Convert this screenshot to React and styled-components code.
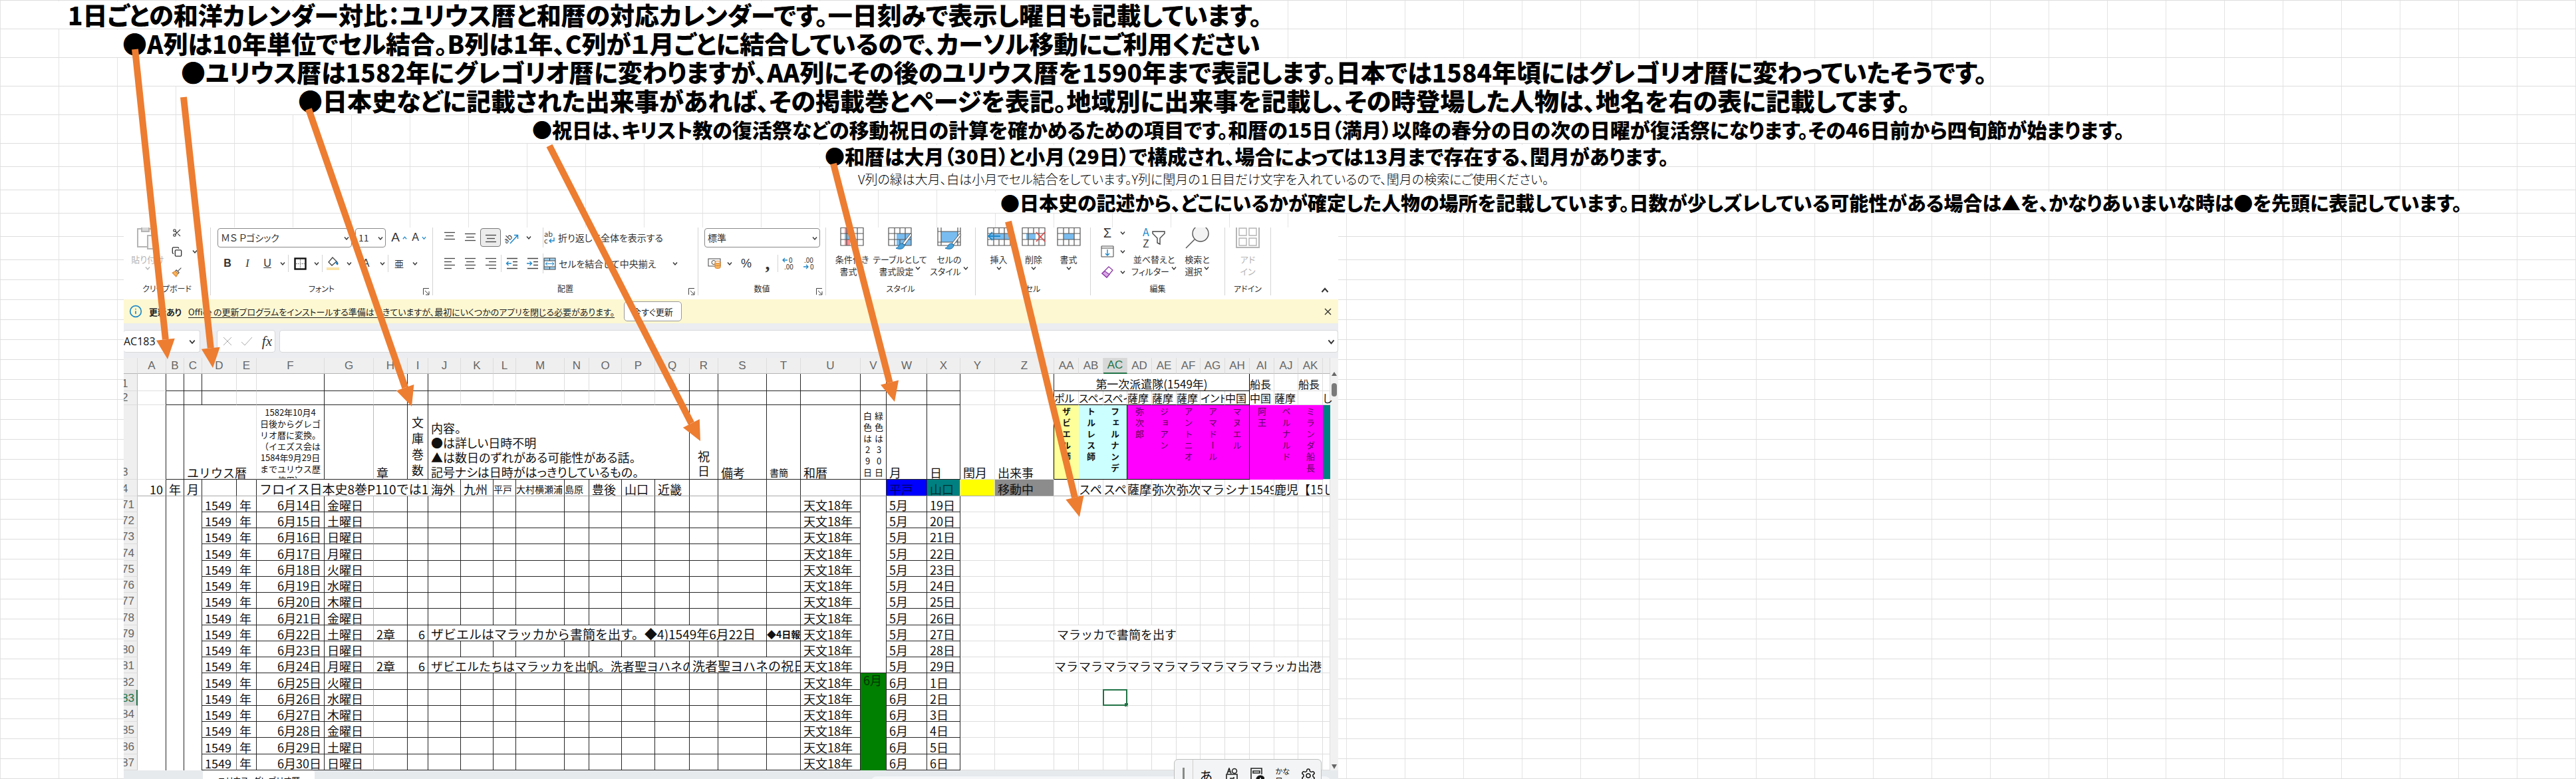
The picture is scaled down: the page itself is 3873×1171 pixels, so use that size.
import React from 'react';
import styled, { createGlobalStyle, css } from 'styled-components';
import { LuSettings, LuScissors, LuCopy, LuInfo } from 'react-icons/lu';

const LINE = '#dedede';
const INK = '#262626';
const ORANGE = '#ed7d31';

const GlobalStyle = createGlobalStyle`
  * {
    box-sizing: border-box;
  }

  body {
    margin: 0;
    background: #fff;
    color: #111;
    font-family: 'Noto Sans CJK JP', sans-serif;
    font-feature-settings: 'palt';
  }

  button, input, select {
    margin: 0;
    padding: 0;
    border: 0;
    background: none;
    color: inherit;
    font: inherit;
    font-feature-settings: inherit;
  }
`;

/* ---------- outer sheet ---------- */

const Page = styled.main`
  position: relative;
  height: 100vh;
  overflow: hidden;
  border-top: 1px solid ${LINE};
  background: repeating-linear-gradient(90deg, #e4e4e4 0 1px, transparent 1px 88px);
`;

const NoteRow = styled.div`
  display: flex;
  align-items: flex-end;
  height: ${({ $small }) => ($small ? '35px' : '43px')};
  padding-left: ${({ $col }) => $col * 88}px;
  border-bottom: 1px solid ${LINE};
`;

const Note = styled.p`
  margin: 0;
  padding-left: ${({ $indent }) => $indent || 8}px;
  background: #fff;
  font-size: ${({ $size }) => $size}px;
  font-weight: ${({ $light }) => ($light ? 300 : 900)};
  line-height: ${({ $small }) => ($small ? '32px' : '41px')};
  color: #000;
  white-space: nowrap;
`;

const Body = styled.div`
  padding: 21px 0 0 186px;
  background:
    linear-gradient(${LINE}, ${LINE}) 0 34px / 100% 1px no-repeat,
    linear-gradient(${LINE}, ${LINE}) 0 69px / 100% 1px no-repeat,
    repeating-linear-gradient(transparent 0 29px, ${LINE} 29px 30px) 0 70px no-repeat;
`;

const Arrows = styled.svg`
  position: absolute;
  top: 0;
  left: 0;
  width: 2100px;
  height: 800px;
  pointer-events: none;
`;

/* ---------- excel window ---------- */

const Window = styled.section`
  position: relative;
  display: inline-flex;
  flex-direction: column;
  vertical-align: top;
  background: #fff;
`;

const Ribbon = styled.div`
  display: flex;
  height: 108px;
  font-size: 13px;
  line-height: 18px;
  color: #333;
  white-space: nowrap;
`;

const Group = styled.div`
  position: relative;
  display: flex;
  flex-direction: column;
  width: ${({ $w }) => $w}px;
  height: 102px;
  border-right: 1px solid #d4d4d4;
`;

const GroupBody = styled.div`
  display: flex;
  height: 86px;
  padding-left: ${({ $pad }) => $pad || 0}px;
`;

const GroupLabel = styled.div`
  height: 20px;
  line-height: 20px;
  font-size: 12px;
  text-align: center;
`;

const Launcher = styled.button`
  position: absolute;
  right: 4px;
  bottom: 0;
  width: 10px;
  height: 12px;
  line-height: 0;
`;

const Stack = styled.div`
  display: flex;
  flex-direction: column;
  gap: ${({ $gap }) => $gap || 0}px;
`;

const Line = styled.div`
  display: flex;
  align-items: center;
  height: ${({ $h }) => $h || 30}px;
`;

const Tool = styled.button`
  display: flex;
  align-items: center;
  justify-content: ${({ $start }) => ($start ? 'flex-start' : 'center')};
  gap: 4px;
  width: ${({ $w }) => $w}px;
  height: 28px;
  flex: none;
  font-size: 14px;
  ${({ $on }) => $on && css`
    border: 1px solid #777;
    border-radius: 4px;
    background: #ececec;
  `}
`;

const Glyph = styled.span`
  font-family: ${({ $serif }) => ($serif ? "'Liberation Serif', serif" : "'Liberation Sans', sans-serif")};
  font-size: ${({ $size }) => $size || 16}px;
  font-weight: ${({ $bold }) => ($bold ? 700 : 400)};
  font-style: ${({ $italic }) => ($italic ? 'italic' : 'normal')};
  text-decoration: ${({ $under }) => ($under ? 'underline' : 'none')};
  color: #333;
`;

const BigTool = styled.button`
  display: flex;
  flex-direction: column;
  align-items: center;
  width: ${({ $w }) => $w}px;
  color: ${({ $off }) => ($off ? '#b5b5b5' : '#333')};

  svg:first-child {
    margin-bottom: 6px;
  }
`;

const Collapse = styled.button`
  align-self: flex-end;
  margin: 0 14px 8px auto;
  line-height: 0;
`;

const Divider = styled.span`
  width: 1px;
  height: ${({ $h }) => $h || 26}px;
  flex: none;
  background: #d4d4d4;
`;

const SelectBox = styled.label`
  position: relative;
  display: block;
  width: ${({ $w }) => $w}px;
  height: 29px;
  margin-right: 5px;

  select {
    width: 100%;
    height: 100%;
    padding-left: 4px;
    border: 1px solid #8a8a8a;
    border-radius: 4px;
    background: #fff;
    appearance: none;
    font-size: 14px;
  }

  svg {
    position: absolute;
    top: 11px;
    right: 4px;
  }
`;

const Notice = styled.div`
  display: flex;
  align-items: center;
  height: 36px;
  padding: 0 10px 0 8px;
  background: #fdf8d2;
  font-size: 13px;
  color: #222;

  strong {
    margin: 0 10px;
  }

  a {
    color: inherit;
    text-underline-offset: 3px;
  }
`;

const NoticeButton = styled.button`
  height: 30px;
  margin-left: 14px;
  padding: 0 12px;
  border: 1px solid #9a9a9a;
  border-radius: 5px;
  background: #fff;
`;

const CloseButton = styled.button`
  margin-left: auto;
  line-height: 0;
`;

const FormulaBar = styled.div`
  display: flex;
  gap: 6px;
  height: 52px;
  padding: 10px 0 8px;
  background: #ebedf0;
`;

const FormulaBox = styled.div`
  display: flex;
  align-items: center;
  justify-content: space-between;
  flex: ${({ $w }) => ($w ? `0 0 ${$w}px` : 1)};
  padding: 0 4px 0 8px;
  border: 1px solid #d6d8da;
  border-radius: 4px;
  background: #fff;

  input {
    width: 100%;
    font-family: 'Open Sans', sans-serif;
    font-size: 16px;
    outline: 0;
  }
`;

const NameBox = styled(FormulaBox)`
  margin-right: 19px;
  padding: 0 6px 0 0;
  border-left: 0;
`;

const SheetArea = styled.div`
  display: flex;
`;

const Table = styled.table`
  width: 1814px;
  table-layout: fixed;
  border-collapse: separate;
  border-spacing: 0;
  font-size: 18px;
  line-height: 20px;
`;

const ColHead = styled.th`
  height: 24px;
  padding: 0;
  border-right: 1px solid #dcdcdc;
  border-bottom: ${({ $on }) => ($on ? '2px solid #217346' : '1px solid #b5b5b5')};
  background: ${({ $on }) => ($on ? '#d8d8d8' : '#efefef')};
  color: ${({ $on }) => ($on ? '#217346' : '#666')};
  font-family: 'Liberation Sans', sans-serif;
  font-size: 17px;
  font-weight: 400;
`;

const RowHead = styled.th`
  padding: 0;
  border-right: ${({ $on }) => ($on ? '2px solid #217346' : '1px solid #c4c4c4')};
  border-bottom: 1px solid #dcdcdc;
  background: ${({ $on }) => ($on ? '#d8d8d8' : '#efefef')};
  color: ${({ $on }) => ($on ? '#217346' : '#666')};
  font-family: 'Liberation Sans', sans-serif;
  font-size: 17px;
  font-weight: 400;
  text-align: left;
  text-indent: -3px;
  vertical-align: bottom;
  overflow: hidden;
`;

const Row = styled.tr`
  height: ${({ $h }) => $h}px;
`;

const Cell = styled.td`
  position: relative;
  padding: 0 ${({ $tight }) => ($tight ? 0 : 4)}px;
  border-right: ${({ $r }) => ($r === 'none' ? '0' : `1px solid ${$r || LINE}`)};
  border-bottom: ${({ $b }) => ($b === 'none' ? '0' : `1px solid ${$b || LINE}`)};
  background: ${({ $bg }) => $bg || 'transparent'};
  color: ${({ $color }) => $color || '#111'};
  font-size: ${({ $size }) => $size || 18}px;
  font-weight: ${({ $bold }) => ($bold ? 700 : 'inherit')};
  font-feature-settings: ${({ $full }) => ($full ? 'normal' : 'inherit')};
  text-align: ${({ $align }) => $align || 'left'};
  vertical-align: ${({ $v }) => $v || 'bottom'};
  white-space: nowrap;
  overflow: ${({ $clip }) => ($clip ? 'hidden' : 'visible')};
`;

const Memo = styled.div`
  height: 110px;
  padding-top: 2px;
  overflow: hidden;
  font-size: 13px;
  line-height: 17px;
  text-align: center;
  white-space: pre;
`;

const Contents = styled.div`
  line-height: 22px;
  white-space: pre;
`;

const Upright = styled.span`
  display: inline-flex;
  flex-direction: column;
  width: ${({ $pitch }) => $pitch}px;
  padding: 1px 0;
  vertical-align: top;

  span {
    display: grid;
    place-items: center;
    height: ${({ $pitch }) => $pitch}px;
    line-height: ${({ $pitch }) => $pitch}px;
    writing-mode: vertical-rl;
    text-orientation: upright;
  }
`;

const Selected = styled.span`
  position: absolute;
  inset: -1px;
  border: 2px solid #217346;

  &::after {
    content: '';
    position: absolute;
    right: -3px;
    bottom: -3px;
    width: 5px;
    height: 5px;
    background: #217346;
  }
`;

const ScrollTrack = styled.div`
  display: flex;
  flex-direction: column;
  align-items: center;
  justify-content: space-between;
  width: 12px;
  padding: 8px 0 2px;
  background: #f1f1f1;
`;

const ScrollThumb = styled.div`
  width: 8px;
  height: 20px;
  margin-top: 6px;
  border-radius: 4px;
  background: #7a7a7a;
`;

const Tabs = styled.div`
  display: flex;
  height: 42px;
  padding-left: 119px;
  background: #e6eaed;
`;

const SheetTab = styled.button`
  width: 168px;
  height: 30px;
  border-radius: 4px;
  background: #fff;
  font-size: 13px;
  line-height: 30px;
`;

const HScroll = styled.div`
  height: 16px;
  width: 690px;
  margin: 9px 12px 0 auto;
  border-radius: 8px;
  background: #f4f6f7;
`;

const Ime = styled.div`
  position: absolute;
  right: 25px;
  bottom: 9px;
  display: flex;
  align-items: center;
  width: 222px;
  height: 50px;
  border: 1px solid #bdbdbd;
  border-radius: 6px;
  background: #f3f4f5;
  font-size: 20px;

  button {
    flex: 1;
    line-height: 13px;
  }

  small {
    display: block;
    font-size: 11px;
  }
`;

const ImeGrip = styled.span`
  width: 28px;
  height: 100%;
  padding: 12px 0 0 12px;
  border-right: 1px solid #cfcfcf;

  &::before {
    content: '';
    display: block;
    width: 3px;
    height: 26px;
    background: #888;
  }
`;

/* ---------- icons ---------- */

const Chevron = ({ size = 8, up, color = '#333' }) => (
  <svg width={size} height={size} viewBox="0 0 8 8" fill="none" stroke={color} strokeWidth="1.4">
    <path d={up ? 'M1 6 4 2.5 7 6' : 'M1 2.5 4 6 7 2.5'} />
  </svg>
);

const LaunchIcon = () => (
  <svg width="10" height="11" viewBox="0 0 10 11" fill="none" stroke="#444">
    <path d="M.5 10V.5H9M3 4l6 6M9 5v5H4" />
  </svg>
);

const PasteIcon = () => (
  <svg width="34" height="33" viewBox="0 0 34 33" fill="none" stroke="#b5b5b5" strokeWidth="2">
    <path d="M7 2H2v27h14M20 2h4v8" />
    <path d="M8 0v6h11V0" fill="#d8d8d8" />
    <rect x="17" y="12" width="14" height="20" fill="#f7f7f7" />
  </svg>
);

const BrushIcon = () => (
  <svg width="20" height="20" viewBox="0 0 20 20" fill="none" stroke="#444" strokeWidth="1.3">
    <path d="M18 2 12 8M9 6l5 5-2 2-5-5z" fill="#fff" />
    <path d="M7 8 1.5 11.5 8.5 18.5 12 13z" fill="#f7b45c" stroke="#d9822b" />
  </svg>
);

const AlignIcon = ({ rows, y = 0 }) => (
  <svg width="18" height="20" viewBox="0 0 18 20" stroke="#444" strokeWidth="1.3">
    {rows.map(([x, w], i) => (
      <path key={i} d={`M${x} ${2.5 + y + i * 5}h${w}`} />
    ))}
  </svg>
);

const IndentIcon = ({ right }) => (
  <svg width="18" height="20" viewBox="0 0 18 20" fill="none" stroke="#444" strokeWidth="1.3">
    <path d="M1 2.5h16M10 7.5h7M10 12.5h7M1 17.5h16" />
    <path d={right ? 'M0 10h7M4.5 7 7.5 10l-3 3' : 'M8 10H1M3.5 7 .5 10l3 3'} stroke="#1e88c9" />
  </svg>
);

const BordersIcon = () => (
  <svg width="19" height="19" viewBox="0 0 19 19" fill="none">
    <rect x="1.5" y="1.5" width="16" height="16" stroke="#111" strokeWidth="2.4" />
    <path d="M9.5 3v13M3 9.5h13" stroke="#777" strokeDasharray="2 1" />
  </svg>
);

const FillIcon = () => (
  <svg width="20" height="22" viewBox="0 0 20 22" fill="none">
    <path d="M9 2 3 9l5 5 7-6zM15 8c2 2 2 4 1 5" stroke="#444" strokeWidth="1.3" />
    <path d="M14 7l3 6-3-1z" fill="#1e88c9" />
    <rect x="0" y="17" width="19" height="4" fill="#fbe3a6" />
  </svg>
);

const OrientIcon = () => (
  <svg width="22" height="20" viewBox="0 0 22 20" fill="none">
    <text x="-3" y="13" fontSize="12" fill="#444" transform="rotate(-45 8 10)">ab</text>
    <path d="M8 19 19 7M14 6.5h5.5V12" stroke="#1e88c9" strokeWidth="1.5" />
  </svg>
);

const WrapIcon = () => (
  <svg width="18" height="20" viewBox="0 0 18 20" fill="none">
    <text x="1" y="9" fontSize="11" fill="#444">ab</text>
    <text x="1" y="19" fontSize="11" fill="#444">c</text>
    <path d="M16 10v5H9M12 12l-3 3 3 3" stroke="#1e88c9" strokeWidth="1.4" />
  </svg>
);

const MergeIcon = () => (
  <svg width="19" height="19" viewBox="0 0 19 19" fill="none">
    <rect x="1" y="1" width="17" height="17" fill="#9fd0ef" stroke="#444" />
    <rect x="2" y="5" width="15" height="9" fill="#fff" />
    <path d="M1 5h17M1 14h17M9.5 1v4M9.5 14v4" stroke="#444" />
    <path d="M3 9.5h13M6 7 3 9.5 6 12M13 7l3 2.5L13 12" stroke="#1e88c9" />
  </svg>
);

const MoneyIcon = () => (
  <svg width="20" height="18" viewBox="0 0 20 18" fill="none" stroke="#444">
    <rect x="1" y="2" width="18" height="11" />
    <circle cx="9" cy="7.5" r="3" />
    <path d="M11 7v8c0 2 8 2 8 0V7" fill="#f7b45c" stroke="#d9822b" />
    <ellipse cx="15" cy="7" rx="4" ry="1.7" fill="#fff" stroke="#d9822b" />
    <path d="M11 11c0 2 8 2 8 0" stroke="#d9822b" />
  </svg>
);

const DecimalIcon = ({ more }) => (
  <svg width="20" height="20" viewBox="0 0 20 20" fill="none">
    <text x={more ? 10 : 2} y="9" fontSize="10" fill="#333">{more ? '0' : '.00'}</text>
    <text x={more ? 3 : 11} y="19" fontSize="10" fill="#333">{more ? '.00' : '0'}</text>
    <path d={more ? 'M8 5H1M4 2 1 5l3 3' : 'M1 15h7M5 12l3 3-3 3'} stroke="#1e88c9" strokeWidth="1.3" />
  </svg>
);

const GridIcon = ({ kind }) => (
  <svg width="36" height="33" viewBox="0 0 36 33" fill="none">
    {kind === 'cond' && <path d="M7 0h11v9H7zM7 18h8v9H7z" fill="#ff8f94" />}
    {kind === 'cond' && <path d="M7 9h7v9H7z" fill="#79bdf0" />}
    {kind === 'table' && <path d="M13 9h22v18H13z" fill="#79bdf0" />}
    {kind === 'style' && <path d="M6 6h25v16H6z" fill="#79bdf0" />}
    {kind === 'insert' && <path d="M5 9h30v9H5z" fill="#79bdf0" />}
    {kind === 'delete' && <path d="M7 9h14v9H7z" fill="#79bdf0" />}
    {kind === 'format' && <path d="M10 9h16v9H10z" fill="#79bdf0" />}
    <path
      d={kind === 'style' ? 'M1 0v27h34V0M1 6h34M1 22h34M6 0v27M31 0v27' : 'M1 0v27h34V0M1 9h34M1 18h34M10 0v27M18 0v9M18 18v9M26 0v27M1 .5h34'}
      stroke="#555"
      strokeWidth="1.2"
    />
    {(kind === 'table' || kind === 'style') && (
      <g>
        <path d="M34 9 22 24l3 2 11-15z" fill="#fff" stroke="#555" />
        <path d="M21 24c-5 0-4 6-9 7 6 3 13 1 13-5z" fill="#4aa3dc" stroke="#1e6fa8" />
      </g>
    )}
    {kind === 'insert' && <path d="M20 13H2M8 7l-6 6 6 6" stroke="#1e88c9" strokeWidth="1.8" />}
    {kind === 'delete' && <path d="M22 7l13 14M35 7 22 21" stroke="#e04b4b" strokeWidth="1.8" />}
  </svg>
);

const SortIcon = () => (
  <svg width="36" height="33" viewBox="0 0 36 33" fill="none">
    <text x="1" y="13" fontSize="16" fill="#1e88c9">A</text>
    <text x="1" y="30" fontSize="16" fill="#444">Z</text>
    <path d="M16 6h18v3l-7 7v9l-4-2v-7l-7-7z" stroke="#444" strokeWidth="1.4" />
  </svg>
);

const FindIcon = () => (
  <svg width="36" height="33" viewBox="0 0 36 33" fill="none" stroke="#555" strokeWidth="1.4">
    <circle cx="23" cy="9" r="12" fill="#f3f3f3" />
    <path d="M14 18 1 31" />
  </svg>
);

const AddinIcon = () => (
  <svg width="36" height="33" viewBox="0 0 36 33" fill="none" stroke="#b5b5b5" strokeWidth="1.4">
    <path d="M1 0v30h34V0" strokeWidth="2" />
    <path d="M5 1h11v11H5zM20 1h11v11H20zM5 16h11v11H5zM20 16h11v11H20z" />
  </svg>
);

const DownBoxIcon = () => (
  <svg width="20" height="18" viewBox="0 0 20 18" fill="none" stroke="#444">
    <path d="M1 1h18v16H1zM1 4h18" />
    <path d="M10 6v9M7 12l3 3 3-3" stroke="#1e88c9" strokeWidth="1.4" />
  </svg>
);

const EraserIcon = () => (
  <svg width="20" height="18" viewBox="0 0 20 18" fill="none" stroke="#8e3fa8" strokeWidth="1.3">
    <path d="M12 1 18 6 9 17 2 11z" fill="#fff" />
    <path d="M6 7.5 2 11l7 6 4-4.5z" fill="#d9a7e6" />
  </svg>
);

const ImeToolIcon = () => (
  <svg width="20" height="24" viewBox="0 0 20 24" fill="none" stroke="#222" strokeWidth="1.6">
    <path d="M3 9 6 1l3 8M4 6h4M2 10h16v12H2zM7 16h6v-2" />
    <circle cx="14" cy="5" r="3.5" />
  </svg>
);

const ImePadIcon = () => (
  <svg width="22" height="24" viewBox="0 0 22 24" fill="none" stroke="#222" strokeWidth="1.6">
    <path d="M9 22H2V1h16v9M5 5h10v3H5z" />
    <circle cx="16" cy="18" r="6" fill="#111" />
    <path d="M16 15v6" stroke="#fff" />
  </svg>
);

const Arrow = ({ from, to }) => {
  const dx = to[0] - from[0];
  const dy = to[1] - from[1];
  const len = Math.hypot(dx, dy);
  const ux = dx / len;
  const uy = dy / len;
  const bx = to[0] - ux * 30;
  const by = to[1] - uy * 30;
  return (
    <g fill={ORANGE} stroke="none">
      <path d={`M${from[0]} ${from[1]}L${bx} ${by}`} stroke={ORANGE} strokeWidth="10" />
      <path d={`M${to[0]} ${to[1]}L${bx - uy * 14} ${by + ux * 14}L${bx + uy * 14} ${by - ux * 14}Z`} />
    </g>
  );
};

/* ---------- data ---------- */

const notes = [
  { col: 1, size: 37, indent: 14, text: '1日ごとの和洋カレンダー対比：ユリウス暦と和暦の対応カレンダーです。一日刻みで表示し曜日も記載しています。' },
  { col: 2, size: 37, text: '●A列は10年単位でセル結合。B列は1年、C列が１月ごとに結合しているので、カーソル移動にご利用ください' },
  { col: 3, size: 37, text: '●ユリウス暦は1582年にグレゴリオ暦に変わりますが、AA列にその後のユリウス暦を1590年まで表記します。日本では1584年頃にはグレゴリオ暦に変わっていたそうです。' },
  { col: 5, size: 37, text: '●日本史などに記載された出来事があれば、その掲載巻とページを表記。地域別に出来事を記載し、その時登場した人物は、地名を右の表に記載してます。' },
  { col: 9, size: 30, text: '●祝日は、キリスト教の復活祭などの移動祝日の計算を確かめるための項目です。和暦の15日（満月）以降の春分の日の次の日曜が復活祭になります。その46日前から四旬節が始まります。' },
  { col: 14, size: 30, small: true, text: '●和暦は大月（30日）と小月（29日）で構成され、場合によっては13月まで存在する、閏月があります。' },
  { col: 14, size: 19, small: true, light: true, indent: 58, text: 'V列の緑は大月、白は小月でセル結合をしています。Y列に閏月の１日目だけ文字を入れているので、閏月の検索にご使用ください。' },
  { col: 17, size: 29, small: true, text: '●日本史の記述から、どこにいるかが確定した人物の場所を記載しています。日数が少しズレしている可能性がある場合は▲を、かなりあいまいな時は●を先頭に表記しています。' },
];

const arrows = [
  { from: [203, 73], to: [252, 539] },
  { from: [276, 145], to: [320, 552] },
  { from: [464, 163], to: [619, 610] },
  { from: [826, 218], to: [1053, 662] },
  { from: [1253, 245], to: [1345, 603] },
  { from: [1516, 332], to: [1623, 776] },
];

const columns = [
  ['A', 43], ['B', 27], ['C', 27], ['D', 52], ['E', 30], ['F', 102], ['G', 74], ['H', 51], ['I', 31],
  ['J', 49], ['K', 49], ['L', 34], ['M', 73], ['N', 37], ['O', 49], ['P', 50], ['Q', 52], ['R', 43],
  ['S', 73], ['T', 51], ['U', 90], ['V', 39], ['W', 61], ['X', 50], ['Y', 52], ['Z', 89], ['AA', 37],
  ['AB', 37], ['AC', 36], ['AD', 37], ['AE', 37], ['AF', 36], ['AG', 37], ['AH', 37], ['AI', 37],
  ['AJ', 36], ['AK', 37], ['', 11],
];

const people = [
  { name: 'ザビエル師', bg: '#ffff99', bold: true },
  { name: 'トルレス師', bg: '#ccffff', bold: true },
  { name: 'フェルナンデ', bg: '#ccffff', bold: true, r: '#000' },
  { name: '弥次郎' },
  { name: 'ジョアン' },
  { name: 'アントニオ' },
  { name: 'アマドール' },
  { name: 'マヌエル', r: '#000' },
  { name: '阿王' },
  { name: 'ベルナルド' },
  { name: 'ミランダ船長' },
];

const homes = ['ポル', 'スペイ', 'スペイ', '薩摩', '薩摩', '薩摩', 'インド', '中国', '中国', '薩摩', '', 'し'];
const places = ['', 'スペ', 'スペ', '薩摩', '弥次', '弥次', 'マラ', 'シナ', '1549', '鹿児', '【15', 'し'];
const regions = [['海外'], ['九州'], ['平戸', 14], ['大村横瀬浦', 14], ['島原', 14], ['豊後'], ['山口'], ['近畿']];
const weekdays = ['金', '土', '日', '月', '火', '水', '木'];

const days = Array.from({ length: 17 }, (_, i) => ({
  no: 71 + i,
  date: `6月${14 + i}日`,
  weekday: `${weekdays[i % 7]}曜日`,
  month: i < 11 ? '5月' : '6月',
  day: i < 11 ? `${19 + i}日` : `${i - 10}日`,
}));

const isDark = (name) => !['D', 'E', 'G', 'J', 'K', 'L', 'M', 'N', 'O', 'P', 'Y'].includes(name);

const Vertical = ({ text, pitch = 17 }) => (
  <Upright $pitch={pitch}>
    {[...text].map((ch, i) => <span key={i}>{ch}</span>)}
  </Upright>
);

/* ---------- ribbon ---------- */

const Drop = () => <Tool $w={16} aria-label="開く"><Chevron /></Tool>;

const Big = ({ w, icon, lines, off }) => (
  <BigTool $w={w} $off={off}>
    {icon}
    <span>{lines[0]}</span>
    <span>
      {lines[1]} {!off && <Chevron />}
    </span>
  </BigTool>
);

const RibbonBar = () => (
  <Ribbon>
    <Group $w={131}>
      <GroupBody>
        <BigTool $w={72} $off>
          <PasteIcon />
          <span>貼り付け</span>
          <Chevron color="#b5b5b5" />
        </BigTool>
        <Stack>
          <Line $h={15}><Tool $w={16} aria-label="切り取り"><LuScissors size={14} /></Tool></Line>
          <Line $h={42}><Tool $w={16} aria-label="コピー"><LuCopy size={17} /></Tool><Tool $w={38} aria-label="コピーの種類"><Chevron /></Tool></Line>
          <Line $h={20}><Tool $w={16} aria-label="書式のコピー"><BrushIcon /></Tool></Line>
        </Stack>
      </GroupBody>
      <GroupLabel>クリップボード</GroupLabel>
    </Group>

    <Group $w={334}>
      <GroupBody $pad={10}>
        <Stack $gap={9}>
          <Line>
            <SelectBox $w={202}>
              <select aria-label="フォント"><option>ＭＳ Ｐゴシック</option></select>
              <Chevron />
            </SelectBox>
            <SelectBox $w={46}>
              <select aria-label="サイズ"><option>11</option></select>
              <Chevron />
            </SelectBox>
            <Tool $w={30}><Glyph $size={19}>A</Glyph><Chevron up size={7} color="#1e88c9" /></Tool>
            <Tool $w={30}><Glyph $size={16}>A</Glyph><Chevron size={7} color="#1e88c9" /></Tool>
          </Line>
          <Line>
            <Tool $w={30}><Glyph $bold>B</Glyph></Tool>
            <Tool $w={30}><Glyph $serif $italic>I</Glyph></Tool>
            <Tool $w={30}><Glyph $under>U</Glyph></Tool>
            <Drop />
            <Divider />
            <Tool $w={34} aria-label="罫線"><BordersIcon /></Tool>
            <Drop />
            <Divider />
            <Tool $w={32} aria-label="塗りつぶし"><FillIcon /></Tool>
            <Drop />
            <Tool $w={34}><Glyph>A</Glyph></Tool>
            <Drop />
            <Divider />
            <Tool $w={32}>亜</Tool>
            <Drop />
          </Line>
        </Stack>
      </GroupBody>
      <GroupLabel>フォント</GroupLabel>
      <Launcher aria-label="フォントの設定"><LaunchIcon /></Launcher>
    </Group>

    <Group $w={399}>
      <GroupBody $pad={9}>
        <Stack $gap={9}>
          <Line>
            <Tool $w={31} aria-label="上揃え"><AlignIcon rows={[[1, 16], [3, 12], [1, 16]]} /></Tool>
            <Tool $w={31} aria-label="上下中央揃え"><AlignIcon y={2} rows={[[1, 16], [3, 12], [1, 16]]} /></Tool>
            <Tool $w={31} $on aria-label="下揃え"><AlignIcon y={4} rows={[[1, 16], [3, 12], [1, 16]]} /></Tool>
            <Tool $w={34} aria-label="方向"><OrientIcon /></Tool>
            <Drop />
          </Line>
          <Line>
            <Tool $w={31} aria-label="左揃え"><AlignIcon rows={[[1, 16], [1, 11], [1, 16], [1, 11]]} /></Tool>
            <Tool $w={31} aria-label="中央揃え"><AlignIcon rows={[[1, 16], [3, 12], [1, 16], [3, 12]]} /></Tool>
            <Tool $w={31} aria-label="右揃え"><AlignIcon rows={[[1, 16], [6, 11], [1, 16], [6, 11]]} /></Tool>
            <Divider />
            <Tool $w={31} aria-label="インデントを減らす"><IndentIcon /></Tool>
            <Tool $w={31} aria-label="インデントを増やす"><IndentIcon right /></Tool>
          </Line>
        </Stack>
        <Stack $gap={9}>
          <Line><Divider $h={30} /><Tool $w={190} $start><WrapIcon />折り返して全体を表示する</Tool></Line>
          <Line><Divider $h={30} /><Tool $w={190} $start><MergeIcon />セルを結合して中央揃え</Tool><Drop /></Line>
        </Stack>
      </GroupBody>
      <GroupLabel>配置</GroupLabel>
      <Launcher aria-label="配置の設定"><LaunchIcon /></Launcher>
    </Group>

    <Group $w={192}>
      <GroupBody $pad={9}>
        <Stack $gap={9}>
          <Line>
            <SelectBox $w={174}>
              <select aria-label="表示形式"><option>標準</option></select>
              <Chevron />
            </SelectBox>
          </Line>
          <Line>
            <Tool $w={30} aria-label="通貨"><MoneyIcon /></Tool>
            <Drop />
            <Tool $w={34}><Glyph $size={18}>%</Glyph></Tool>
            <Tool $w={30}><Glyph $serif $bold $size={28}>,</Glyph></Tool>
            <Divider />
            <Tool $w={32} aria-label="小数点以下を増やす"><DecimalIcon more /></Tool>
            <Tool $w={30} aria-label="小数点以下を減らす"><DecimalIcon /></Tool>
          </Line>
        </Stack>
      </GroupBody>
      <GroupLabel>数値</GroupLabel>
      <Launcher aria-label="数値の設定"><LaunchIcon /></Launcher>
    </Group>

    <Group $w={225}>
      <GroupBody $pad={4}>
        <Big w={70} icon={<GridIcon kind="cond" />} lines={['条件付き', '書式']} />
        <Big w={74} icon={<GridIcon kind="table" />} lines={['テーブルとして', '書式設定']} />
        <Big w={74} icon={<GridIcon kind="style" />} lines={['セルの', 'スタイル']} />
      </GroupBody>
      <GroupLabel>スタイル</GroupLabel>
    </Group>

    <Group $w={173}>
      <GroupBody $pad={8}>
        <Big w={53} icon={<GridIcon kind="insert" />} lines={['挿入', '']} />
        <Big w={52} icon={<GridIcon kind="delete" />} lines={['削除', '']} />
        <Big w={53} icon={<GridIcon kind="format" />} lines={['書式', '']} />
      </GroupBody>
      <GroupLabel>セル</GroupLabel>
    </Group>

    <Group $w={202}>
      <GroupBody $pad={10}>
        <Stack>
          <Line $h={15}><Tool $w={30}><Glyph $size={20}>Σ</Glyph></Tool><Drop /></Line>
          <Line $h={42}><Tool $w={30} aria-label="フィル"><DownBoxIcon /></Tool><Drop /></Line>
          <Line $h={20}><Tool $w={30} aria-label="クリア"><EraserIcon /></Tool><Drop /></Line>
        </Stack>
        <Big w={78} icon={<SortIcon />} lines={['並べ替えと', 'フィルター']} />
        <Big w={52} icon={<FindIcon />} lines={['検索と', '選択']} />
      </GroupBody>
      <GroupLabel>編集</GroupLabel>
    </Group>

    <Group $w={69}>
      <GroupBody>
        <Big w={68} off icon={<AddinIcon />} lines={['アド', 'イン']} />
      </GroupBody>
      <GroupLabel>アドイン</GroupLabel>
    </Group>
    <Collapse aria-label="リボンを折りたたむ"><Chevron up size={12} /></Collapse>
  </Ribbon>
);

/* ---------- table ---------- */

const HeaderRows = () => {
  const top = columns.slice(0, 26);
  return (
    <>
      <Row $h={26}>
        <RowHead>1</RowHead>
        {top.map(([name]) => (
          <Cell key={name} $r={isDark(name) ? INK : LINE} $b={name === 'A' || name > 'X' ? LINE : INK} />
        ))}
        <Cell colSpan={8} $full $align="center" $size={17} $r="#000" $b="#000">第一次派遣隊(1549年)</Cell>
        <Cell $size={16} $tight>船長</Cell>
        <Cell />
        <Cell $size={16} $tight>船長</Cell>
        <Cell $tight />
      </Row>
      <Row $h={21}>
        <RowHead>2</RowHead>
        {top.map(([name]) => (
          <Cell key={name} $r={isDark(name) ? INK : LINE} $b={name === 'A' || name > 'X' ? LINE : INK} />
        ))}
        {homes.map((h, i) => (
          <Cell key={i} $size={16} $tight $clip={h.length > 2} $r={i === 7 ? '#000' : LINE} $b={i < 8 ? '#000' : LINE}>{h}</Cell>
        ))}
      </Row>
      <Row $h={112}>
        <RowHead>3</RowHead>
        <Cell $r={INK} />
        <Cell $r={INK} $b={INK} />
        <Cell colSpan={3} $full $b={INK}>ユリウス暦</Cell>
        <Cell $r={INK} $b={INK} $full $tight $v="top">
          <Memo>{'1582年10月4\n日後からグレゴ\nリオ暦に変換。\n（イエズス会は\n1584年9月29日\nまでユリウス歴\n使用）'}</Memo>
        </Cell>
        <Cell $b={INK} $r="#bbb" />
        <Cell $r={INK} $b={INK}>章</Cell>
        <Cell $r={INK} $b={INK} $tight $align="center"><Vertical text="文庫巻数" pitch={24} /></Cell>
        <Cell colSpan={8} $r={INK} $b={INK}>
          <Contents>{'内容。\n●は詳しい日時不明\n▲は数日のずれがある可能性がある話。\n記号ナシは日時がはっきりしているもの。'}</Contents>
        </Cell>
        <Cell $r={INK} $b={INK} $tight $align="center"><Vertical text="祝日" pitch={22} /></Cell>
        <Cell $r={INK} $b={INK}>備考</Cell>
        <Cell $r={INK} $b={INK} $size={14}>書簡</Cell>
        <Cell $r={INK} $b={INK}>和暦</Cell>
        <Cell $r={INK} $b={INK} $size={13} $tight $align="center">
          <Vertical text="白色は29日" />
          <Vertical text="緑色は30日" />
        </Cell>
        <Cell $r={INK} $b={INK}>月</Cell>
        <Cell $r={INK} $b={INK}>日</Cell>
        <Cell>閏月</Cell>
        <Cell $r="#000">出来事</Cell>
        {people.map(({ name, bg, bold, r }, i) => (
          <Cell
            key={name}
            $bg={bg || '#ff00ff'}
            $color={bg ? '#111' : '#5a005a'}
            $bold={bold}
            $size={13}
            $tight
            $align="center"
            $v="top"
            $r={r || 'none'}
            $b={i < 8 ? '#000' : '#ff00ff'}
          >
            <Vertical text={name} />
          </Cell>
        ))}
        <Cell $bg="#008080" $r="none" />
      </Row>
      <Row $h={25}>
        <RowHead>4</RowHead>
        <Cell $align="right" $r={INK} $b="#aaa">10</Cell>
        <Cell $r={INK} $b="#aaa">年</Cell>
        <Cell $r={INK} $b="#aaa">月</Cell>
        <Cell $r={INK} $b="#aaa" />
        <Cell $r={INK} $b="#aaa" />
        <Cell colSpan={4} $full $clip $size={19} $b="#aaa">フロイス日本史8巻P110では1.</Cell>
        {regions.map(([name, size]) => (
          <Cell key={name} $r={INK} $b="#aaa" $size={size} $tight={Boolean(size)}>{name}</Cell>
        ))}
        {['R', 'S', 'T', 'U', 'V'].map((c) => <Cell key={c} $r={INK} $b="#aaa" />)}
        <Cell $bg="#0000ff" $color="#000060" $r={INK} $b="#aaa">平戸</Cell>
        <Cell $bg="#008080" $color="#003030" $b="#aaa">山口</Cell>
        <Cell $bg="#ffff00" $b="#aaa" />
        <Cell $bg="#8c8c8c" $b="#aaa">移動中</Cell>
        {places.map((p, i) => <Cell key={i} $b="#aaa" $full $clip $tight>{p}</Cell>)}
      </Row>
    </>
  );
};

const blanks = (from, to, i) =>
  columns.slice(from, to).map(([name]) => <Cell key={`${name}${i}`} $r={INK} $b={INK} />);

const DayRow = ({ d, i }) => {
  const story = {
    79: 'ザビエルはマラッカから書簡を出す。◆4)1549年6月22日',
    81: 'ザビエルたちはマラッカを出帆。洗者聖ヨハネの',
  }[d.no];
  return (
    <Row $h={i % 4 === 3 ? 25 : 24}>
      <RowHead $on={d.no === 83}>{d.no}</RowHead>
      {i === 0 && (
        <>
          <Cell rowSpan={17} $r={INK} $b="none" />
          <Cell rowSpan={17} $r={INK} $b="none" />
          <Cell rowSpan={17} $r={INK} $b="none" />
        </>
      )}
      <Cell $r="#777" $b={INK}>1549</Cell>
      <Cell $r={INK} $b={INK}>年</Cell>
      <Cell $r={INK} $b={INK} $align="right">{d.date}</Cell>
      <Cell $r="#bbb" $b={INK}>{d.weekday}</Cell>
      <Cell $r={INK} $b={INK}>{story ? '2章' : ''}</Cell>
      <Cell $r={INK} $b={INK} $align="right">{story ? '6' : ''}</Cell>
      {!story && blanks(9, 20, i)}
      {d.no === 79 && (
        <>
          <Cell colSpan={10} $full $clip $size={19} $r={INK} $b={INK}>{story}</Cell>
          <Cell $r={INK} $b={INK} $bold $size={14} $clip $tight>◆4日報</Cell>
        </>
      )}
      {d.no === 81 && (
        <>
          <Cell colSpan={8} $full $clip $size={18} $r={INK} $b={INK}>{story}</Cell>
          <Cell colSpan={3} $full $clip $size={19} $r={INK} $b={INK}>洗者聖ヨハネの祝日</Cell>
        </>
      )}
      <Cell $r={INK} $b={INK}>天文18年</Cell>
      {i === 0 && <Cell rowSpan={11} $r={INK} $b={INK} />}
      {i === 11 && <Cell rowSpan={6} $bg="#008000" $color="#003300" $v="top" $r={INK} $b="none">6月</Cell>}
      <Cell $r={INK} $b={INK}>{d.month}</Cell>
      <Cell $r={INK} $b={INK}>{d.day}</Cell>
      <Cell />
      <Cell />
      {d.no === 79 ? (
        <>
          <Cell colSpan={5} $full>マラッカで書簡を出す</Cell>
          {columns.slice(31).map(([name]) => <Cell key={name} />)}
        </>
      ) : d.no === 81 ? (
        <>
          {columns.slice(26, 34).map(([name]) => <Cell key={name} $full $tight>マラ</Cell>)}
          <Cell colSpan={3} $full $tight>マラッカ出港</Cell>
          <Cell />
        </>
      ) : (
        columns.slice(26).map(([name]) => (
          <Cell key={name}>{name === 'AC' && d.no === 83 && <Selected />}</Cell>
        ))
      )}
    </Row>
  );
};

const App = () => (
  <Page>
    <GlobalStyle />
    {notes.map((n) => (
      <NoteRow key={n.text} $col={n.col} $small={n.small}>
        <Note $size={n.size} $small={n.small} $light={n.light} $indent={n.indent}>{n.text}</Note>
      </NoteRow>
    ))}

    <Body>
      <Window>
        <RibbonBar />

        <Notice>
          <LuInfo size={20} color="#1e88c9" />
          <strong>更新あり</strong>
          <a href="#update">Office の更新プログラムをインストールする準備はできていますが、最初にいくつかのアプリを閉じる必要があります。</a>
          <NoticeButton>今すぐ更新</NoticeButton>
          <CloseButton aria-label="閉じる">
            <svg width="11" height="11" viewBox="0 0 11 11" stroke="#333" strokeWidth="1.4">
              <path d="M1 1l9 9M10 1l-9 9" />
            </svg>
          </CloseButton>
        </Notice>

        <FormulaBar>
          <NameBox $w={115}>
            <input aria-label="名前ボックス" defaultValue="AC183" />
            <Chevron size={11} />
          </NameBox>
          <FormulaBox $w={88}>
            <svg width="14" height="14" viewBox="0 0 14 14" stroke="#aaa"><path d="M1 1l12 12M13 1 1 13" /></svg>
            <svg width="18" height="14" viewBox="0 0 18 14" fill="none" stroke="#aaa"><path d="M1 8l5 5L17 1" /></svg>
            <Glyph $serif $italic $size={21}>fx</Glyph>
          </FormulaBox>
          <FormulaBox>
            <input aria-label="数式バー" />
            <Chevron size={11} />
          </FormulaBox>
        </FormulaBar>

        <SheetArea>
          <Table>
            <colgroup>
              <col width="21" />
              {columns.map(([name, w]) => <col key={name} width={w} />)}
            </colgroup>
            <thead>
              <tr>
                <ColHead />
                {columns.map(([name]) => <ColHead key={name} $on={name === 'AC'}>{name}</ColHead>)}
              </tr>
            </thead>
            <tbody>
              <HeaderRows />
              {days.map((d, i) => <DayRow key={d.no} d={d} i={i} />)}
            </tbody>
          </Table>
          <ScrollTrack>
            <div>
              <svg width="8" height="6" viewBox="0 0 8 6" fill="#666"><path d="M4 0l4 6H0z" /></svg>
              <ScrollThumb />
            </div>
            <svg width="8" height="7" viewBox="0 0 8 7" fill="#666"><path d="M4 7 0 0h8z" /></svg>
          </ScrollTrack>
        </SheetArea>

        <Tabs>
          <SheetTab>ユリウス・グレゴリオ暦</SheetTab>
          <HScroll />
        </Tabs>

        <Ime>
          <ImeGrip />
          <button>あ</button>
          <button aria-label="ツール"><ImeToolIcon /></button>
          <button aria-label="パッド"><ImePadIcon /></button>
          <button><small>かな</small><small>ロー</small></button>
          <button aria-label="設定"><LuSettings size={24} strokeWidth={1.5} /></button>
        </Ime>
      </Window>
    </Body>

    <Arrows>
      {arrows.map((a) => <Arrow key={a.to[0]} from={a.from} to={a.to} />)}
    </Arrows>
  </Page>
);

export default App;
